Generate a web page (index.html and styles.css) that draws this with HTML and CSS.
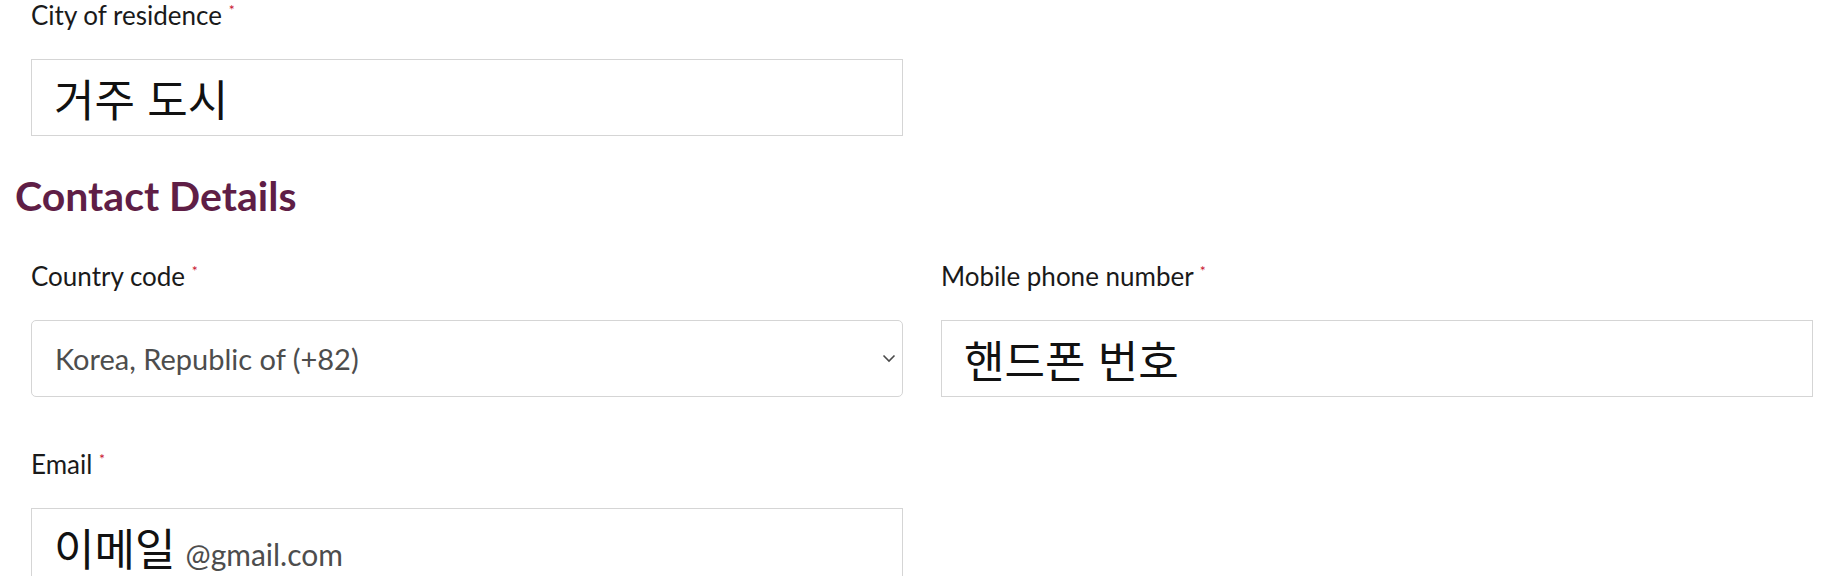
FILE: index.html
```html
<!DOCTYPE html>
<html lang="ko">
<head>
    <meta charset="UTF-8">
    <meta name="viewport" content="width=device-width, initial-scale=1.0">
    <title>Contact Details</title>
    <link rel="stylesheet" href="styles.css">
</head>
<body>
    <form class="form">
        <div class="row">
            <div class="field">
                <label class="field-label">City of residence <span class="req">*</span></label>
                <div class="field-box">
                    <span class="value"><span class="ko">거주 도시</span></span>
                </div>
            </div>
        </div>

        <h2 class="section-title">Contact Details</h2>

        <div class="row">
            <div class="field">
                <label class="field-label">Country code <span class="req">*</span></label>
                <div class="field-box select-box">
                    <span class="value select-text">Korea, Republic of (+82)</span>
                    <svg class="chevron" width="14" height="9" viewBox="0 0 14 9">
                        <path d="M1.5 1.5 L7 7 L12.5 1.5" fill="none" stroke="#4a4a4a" stroke-width="1.6"/>
                    </svg>
                </div>
            </div>
            <div class="field">
                <label class="field-label">Mobile phone number <span class="req">*</span></label>
                <div class="field-box">
                    <span class="value"><span class="ko">핸드폰 번호</span></span>
                </div>
            </div>
        </div>

        <div class="row">
            <div class="field">
                <label class="field-label">Email <span class="req">*</span></label>
                <div class="field-box">
                    <span class="value"><span class="ko">이메일</span> <span class="hint">@gmail.com</span></span>
                </div>
            </div>
        </div>
    </form>
</body>
</html>
```

FILE: styles.css
```css
body {
    margin: 0;
    background-color: #ffffff;
    color: #1a1a1a;
    font-family: Lato, "Noto Sans", sans-serif;
}

.form {
    padding: 0 12px 0 15px;
}

.row {
    display: grid;
    grid-template-columns: 1fr 1fr;
    column-gap: 38px;
    padding-left: 16px;
}

.row + .row {
    margin-top: 52px;
}

.field-label {
    display: block;
    font-size: 26px;
    line-height: 30px;
    margin-bottom: 29px;
}

.req {
    color: #c8102e;
    font-size: 14px;
    line-height: 0;
    vertical-align: 10px;
}

.field-box {
    box-sizing: border-box;
    height: 77px;
    border: 1px solid #d5d5d5;
    padding: 0 14px 0 22px;
    display: flex;
    align-items: center;
    background-color: #ffffff;
}

.value {
    white-space: nowrap;
}

.ko {
    font-family: "Noto Sans CJK KR", sans-serif;
    font-size: 44px;
    color: #111111;
}

.hint {
    font-size: 30px;
    color: #4d4d4d;
    margin-left: 6px;
}

.select-box {
    border-radius: 5px;
    padding: 0 6px 0 23px;
}

.select-text {
    font-size: 29px;
    color: #4d4d4d;
}

.chevron {
    margin-left: auto;
}

.section-title {
    margin: 36px 0 42px;
    font-size: 41px;
    line-height: 47px;
    font-weight: bold;
    color: #5f1e46;
}
```
